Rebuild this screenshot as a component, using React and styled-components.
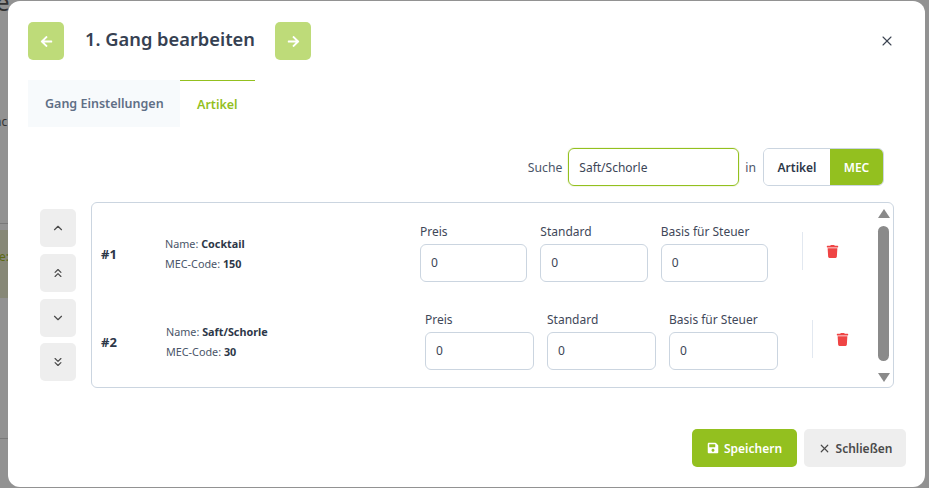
import React from 'react'
import styled, { createGlobalStyle } from 'styled-components'
import { FaArrowLeft, FaArrowRight, FaTrash, FaSave } from 'react-icons/fa'
import { ChevronUp, ChevronDown, ChevronsUp, ChevronsDown, X } from 'lucide-react'

const GlobalStyle = createGlobalStyle`
  html, body {
    margin: 0;
    padding: 0;
    width: 929px;
    height: 488px;
    overflow: hidden;
    background: #929292;
    font-family: "Noto Sans", "Open Sans", sans-serif;
    color: #2d3748;
  }
`

const green = '#93c01f'

const Backdrop = styled.div`
  position: relative;
  width: 929px;
  height: 488px;
  overflow: hidden;
`

const BehindStrip = styled.div`
  position: absolute;
  left: 0;
  top: 230px;
  width: 8px;
  height: 68px;
  background: #878877;
`

const BehindText = styled.span`
  position: absolute;
  left: ${({ $left }) => $left}px;
  top: ${({ $top }) => $top}px;
  font-size: ${({ $size }) => $size}px;
  color: ${({ $color }) => $color};
  line-height: 1;
`

const BehindLine = styled.div`
  position: absolute;
  left: 0;
  top: ${({ $top }) => $top}px;
  width: 8px;
  height: 1px;
  background: #7a7a7a;
`

const Modal = styled.div`
  position: absolute;
  left: 8px;
  top: 1px;
  width: 917px;
  height: 486px;
  box-sizing: border-box;
  background: #fff;
  border-radius: 12px;
  padding: 21px 19px 20px 20px;
  display: flex;
  flex-direction: column;
`

const Header = styled.header`
  display: flex;
  align-items: center;
  height: 38px;
`

const NavButton = styled.button`
  width: 36px;
  height: 38px;
  border: 0;
  padding: 0;
  border-radius: 5px;
  background: #bedb79;
  color: #fff;
  display: flex;
  align-items: center;
  justify-content: center;
  font-size: 13px;
`

const Title = styled.h2`
  margin: 0 20px 0 21px;
  width: 170px;
  font-size: 18.3px;
  font-weight: 600;
  line-height: 32px;
  position: relative;
  top: -2px;
  white-space: nowrap;
  color: #364152;
`

const CloseButton = styled.button`
  margin-left: auto;
  margin-right: 11px;
  width: 16px;
  height: 16px;
  border: 0;
  padding: 0;
  background: none;
  color: #3c4452;
  display: flex;
  align-items: center;
  justify-content: center;
`

const Tabs = styled.nav`
  display: flex;
  margin-top: 20px;
  height: 47px;
`

const Tab = styled.div`
  box-sizing: border-box;
  width: ${({ $width }) => $width}px;
  padding-left: 17px;
  display: flex;
  align-items: center;
  font-size: 12.5px;
  font-weight: 600;
  color: ${({ $active }) => ($active ? green : '#5f6f86')};
  background: ${({ $active }) => ($active ? '#fff' : '#f7fafc')};
  border-top: ${({ $active }) => ($active ? `1px solid ${green}` : '0')};
`

const SearchRow = styled.div`
  display: flex;
  align-items: center;
  justify-content: flex-end;
  margin-top: 21px;
  padding-right: 22px;
  height: 38px;
  font-size: 12.2px;
  color: #4a5568;
`

const SearchInput = styled.div`
  box-sizing: border-box;
  width: 171px;
  height: 38px;
  margin: 0 6px;
  padding: 0 10px;
  display: flex;
  align-items: center;
  border: 1px solid ${green};
  border-radius: 6px;
  box-shadow: 0 0 0 1px #f3f8e6;
  font-size: 12px;
  color: #3c4556;
`

const Toggle = styled.div`
  display: flex;
  height: 38px;
  margin-left: 7px;
  box-sizing: border-box;
  border: 1px solid #cbd5e0;
  border-radius: 6px;
  overflow: hidden;
  font-size: 12px;
  font-weight: 600;
`

const ToggleOption = styled.div`
  display: flex;
  align-items: center;
  justify-content: center;
  width: ${({ $width }) => $width}px;
  color: ${({ $active }) => ($active ? '#fff' : '#2d3748')};
  background: ${({ $active }) => ($active ? green : '#fff')};
`

const ListArea = styled.div`
  display: flex;
  margin-top: 16px;
  margin-left: 12px;
`

const MoveColumn = styled.div`
  display: flex;
  flex-direction: column;
  gap: 6.8px;
  width: 36px;
  margin-top: 7px;
  margin-right: 15px;
`

const MoveButton = styled.button`
  width: 36px;
  height: 38px;
  border: 0;
  padding: 0;
  border-radius: 5px;
  background: #eeeeee;
  color: #4a4a4a;
  display: flex;
  align-items: center;
  justify-content: center;
`

const Panel = styled.div`
  box-sizing: border-box;
  width: 803px;
  height: 186px;
  border: 1px solid #cbd5e0;
  border-radius: 6px;
  display: flex;
  justify-content: space-between;
`

const Rows = styled.div`
  padding-top: 4px;
  flex: 1;
`

const Row = styled.div`
  display: flex;
  align-items: center;
  height: 88px;
  padding-left: 9px;
`

const Num = styled.div`
  width: ${({ $width }) => $width}px;
  padding-top: 5px;
  font-size: 13px;
  font-weight: 700;
`

const Info = styled.div`
  width: ${({ $width }) => $width}px;
  padding-top: 6px;
  font-size: 10.8px;
  line-height: 20px;
  color: #4a5568;

  b {
    color: #2d3748;
    font-weight: 700;
  }
`

const Fields = styled.div`
  display: flex;
  gap: 13px;
  width: ${({ $width }) => $width}px;
`

const Field = styled.label`
  flex: 1;
  display: block;
`

const FieldLabel = styled.div`
  font-size: 12px;
  line-height: 21px;
  margin-bottom: 2px;
  color: #3f4859;
  white-space: nowrap;
`

const ValueBox = styled.div`
  box-sizing: border-box;
  height: 38px;
  padding: 0 10px;
  display: flex;
  align-items: center;
  border: 1px solid #cbd5e0;
  border-radius: 6px;
  font-size: 12px;
  color: #3c4556;
`

const Divider = styled.div`
  width: 1px;
  height: 38px;
  margin-left: 34px;
  background: #e2e8f0;
`

const TrashButton = styled.button`
  margin-left: 22px;
  width: 14px;
  border: 0;
  padding: 0;
  background: none;
  color: #ef4444;
  display: flex;
  justify-content: center;
  font-size: 13px;
`

const ScrollBar = styled.div`
  width: 19px;
  display: flex;
  flex-direction: column;
  align-items: center;
  padding: 6px 0 5px;
  box-sizing: border-box;
  flex-shrink: 0;
`

const ScrollArrow = styled.div`
  width: 0;
  height: 0;
  border-left: 6.5px solid transparent;
  border-right: 6.5px solid transparent;
  border-${({ $dir }) => ($dir === 'up' ? 'bottom' : 'top')}: 9px solid #8a8a8a;
`

const ScrollThumb = styled.div`
  flex: 1;
  width: 11px;
  margin: 8px 0 12px;
  background: #8a8a8a;
  border-radius: 6px;
`

const Footer = styled.footer`
  margin-top: auto;
  display: flex;
  justify-content: flex-end;
  gap: 7px;
`

const FooterButton = styled.button`
  height: 38px;
  width: ${({ $width }) => $width}px;
  border: 0;
  padding: 0;
  border-radius: 5px;
  background: ${({ $primary }) => ($primary ? green : '#eeeeee')};
  color: ${({ $primary }) => ($primary ? '#fff' : '#4a4a4a')};
  display: flex;
  align-items: center;
  justify-content: center;
  gap: 5px;
  font-family: inherit;
  font-size: 12px;
  font-weight: 600;
`

const rows = [
  { num: '#1', name: 'Cocktail', code: '150', numWidth: 64, infoWidth: 255, fieldsWidth: 348 },
  { num: '#2', name: 'Saft/Schorle', code: '30', numWidth: 65, infoWidth: 259, fieldsWidth: 353 },
]

const fields = ['Preis', 'Standard', 'Basis für Steuer']

const App = () => {
  return (
    <Backdrop>
      <GlobalStyle />
      <BehindText $left={-4} $top={-10} $size={24} $color="#333">e</BehindText>
      <BehindText $left={-6} $top={116} $size={12} $color="#333">nc</BehindText>
      <BehindLine $top={223} />
      <BehindStrip />
      <BehindText $left={-1} $top={251} $size={12} $color="#5c6a12">e:</BehindText>
      <BehindLine $top={438} />
      <Modal>
        <Header>
          <NavButton><FaArrowLeft /></NavButton>
          <Title>1. Gang bearbeiten</Title>
          <NavButton><FaArrowRight /></NavButton>
          <CloseButton><X size={16} strokeWidth={1.6} /></CloseButton>
        </Header>
        <Tabs>
          <Tab $width={152}>Gang Einstellungen</Tab>
          <Tab $width={75} $active>Artikel</Tab>
        </Tabs>
        <SearchRow>
          Suche
          <SearchInput>Saft/Schorle</SearchInput>
          in
          <Toggle>
            <ToggleOption $width={66}>Artikel</ToggleOption>
            <ToggleOption $width={53} $active>MEC</ToggleOption>
          </Toggle>
        </SearchRow>
        <ListArea>
          <MoveColumn>
            <MoveButton><ChevronUp size={14} /></MoveButton>
            <MoveButton><ChevronsUp size={14} /></MoveButton>
            <MoveButton><ChevronDown size={14} /></MoveButton>
            <MoveButton><ChevronsDown size={14} /></MoveButton>
          </MoveColumn>
          <Panel>
            <Rows>
              {rows.map((row) => (
                <Row key={row.num}>
                  <Num $width={row.numWidth}>{row.num}</Num>
                  <Info $width={row.infoWidth}>
                    <div>Name: <b>{row.name}</b></div>
                    <div>MEC-Code: <b>{row.code}</b></div>
                  </Info>
                  <Fields $width={row.fieldsWidth}>
                    {fields.map((label) => (
                      <Field key={label}>
                        <FieldLabel>{label}</FieldLabel>
                        <ValueBox>0</ValueBox>
                      </Field>
                    ))}
                  </Fields>
                  <Divider />
                  <TrashButton><FaTrash /></TrashButton>
                </Row>
              ))}
            </Rows>
            <ScrollBar>
              <ScrollArrow $dir="up" />
              <ScrollThumb />
              <ScrollArrow $dir="down" />
            </ScrollBar>
          </Panel>
        </ListArea>
        <Footer>
          <FooterButton $primary $width={105}><FaSave /> Speichern</FooterButton>
          <FooterButton $width={102}><X size={13} strokeWidth={2.2} /> Schließen</FooterButton>
        </Footer>
      </Modal>
    </Backdrop>
  )
}

export default App
